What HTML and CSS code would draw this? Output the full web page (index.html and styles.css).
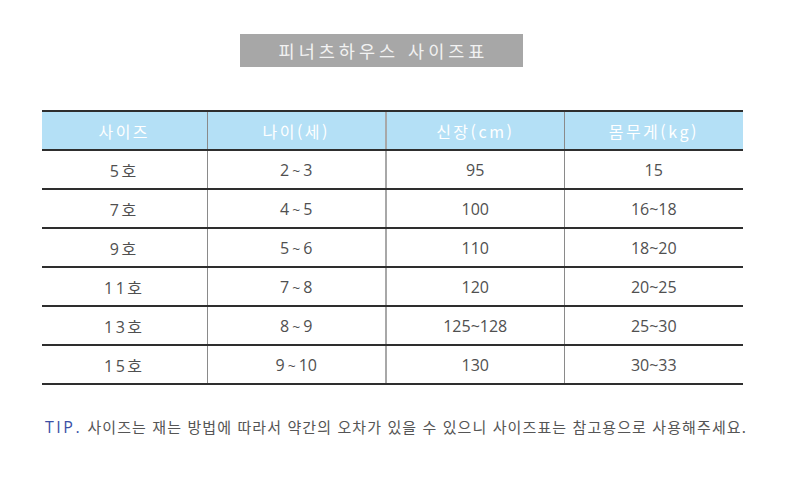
FILE: index.html
```html
<!DOCTYPE html>
<html lang="ko">
<head>
<meta charset="utf-8">
<link rel="stylesheet" href="styles.css">
</head>
<body>
<div class="page">
  <div class="title-wrap"><div class="title">피너츠하우스 사이즈표</div></div>
  <table class="size-table">
    <colgroup>
      <col class="c1"><col class="c2"><col class="c3"><col class="c4">
    </colgroup>
    <thead>
      <tr><th>사이즈</th><th>나이(세)</th><th class="thick">신장(cm)</th><th>몸무게(kg)</th></tr>
    </thead>
    <tbody>
      <tr><td class="sp">5호</td><td>2<span class="tl">~</span>3</td><td class="thick">95</td><td>15</td></tr>
      <tr><td class="sp">7호</td><td>4<span class="tl">~</span>5</td><td class="thick">100</td><td>16~18</td></tr>
      <tr><td class="sp">9호</td><td>5<span class="tl">~</span>6</td><td class="thick">110</td><td>18~20</td></tr>
      <tr><td class="sp">11호</td><td>7<span class="tl">~</span>8</td><td class="thick">120</td><td>20~25</td></tr>
      <tr><td class="sp">13호</td><td>8<span class="tl">~</span>9</td><td class="thick">125~128</td><td>25~30</td></tr>
      <tr><td class="sp">15호</td><td>9<span class="tl">~</span>10</td><td class="thick">130</td><td>30~33</td></tr>
    </tbody>
  </table>
  <p class="tip"><span class="tip-label">TIP.</span> 사이즈는 재는 방법에 따라서 약간의 오차가 있을 수 있으니 사이즈표는 참고용으로 사용해주세요.</p>
</div>
</body>
</html>
```

FILE: styles.css
```css
html, body {
  margin: 0;
  padding: 0;
  background: #ffffff;
}
body {
  font-family: "Open Sans", "Noto Sans CJK KR", sans-serif;
  color: #555555;
}
.page {
  width: 800px;
  height: 489px;
  padding-top: 34px;
  box-sizing: border-box;
}
.title-wrap {
  display: flex;
  justify-content: flex-start;
  padding-left: 240px;
}
.title {
  width: 283px;
  height: 33px;
  background: #a7a7a7;
  color: #f2f2f2;
  font-family: "Noto Sans CJK KR", sans-serif;
  font-size: 17.5px;
  letter-spacing: 4px;
  line-height: 33px;
  text-align: center;
  text-indent: 4px;
}
.size-table {
  margin-top: 43px;
  margin-left: 42px;
  width: 701px;
  border-collapse: collapse;
  table-layout: fixed;
}
.c1 { width: 165px; }
.c2 { width: 179px; }
.c3 { width: 178px; }
.c4 { width: 179px; }
.size-table th,
.size-table td {
  height: 37px;
  padding: 0;
  text-align: center;
  border-top: 2px solid #2e2e2e;
  border-bottom: 2px solid #2e2e2e;
  border-left: 1px solid #8a8a8a;
  font-size: 16px;
  font-weight: 400;
}
.size-table th:first-child,
.size-table td:first-child {
  border-left: none;
}
.size-table th {
  background: #b4e0f6;
  color: #ffffff;
  letter-spacing: 2.5px;
  font-family: "Noto Sans CJK KR", sans-serif;
  font-size: 16px;
}
.size-table .thick {
  border-left: 2px solid #a8a8a8;
}
.size-table td {
  color: #505050;
}
.size-table td.sp {
  letter-spacing: 2.5px;
}
.tl {
  display: inline-block;
  margin: 0 3px;
  font-size: 14px;
}
.tip {
  margin: 31px 0 0 45px;
  font-family: "Noto Sans CJK KR", sans-serif;
  font-size: 15px;
  letter-spacing: 1.1px;
  color: #555555;
}
.tip-label {
  color: #3b50a6;
  font-family: "Open Sans", sans-serif;
  font-size: 16px;
  letter-spacing: 2.5px;
}
```
